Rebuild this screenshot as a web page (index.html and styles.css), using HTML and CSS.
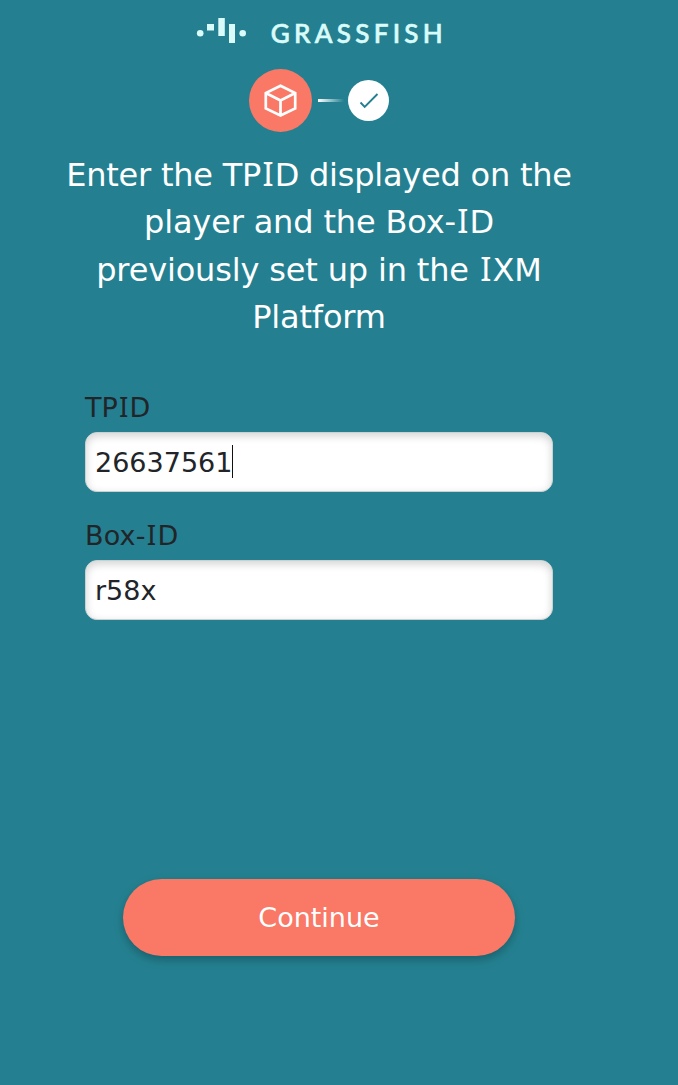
FILE: index.html
```html
<!DOCTYPE html>
<html lang="en">
<head>
<meta charset="utf-8">
<title>Grassfish</title>
<link rel="stylesheet" href="styles.css">
</head>
<body>
<main class="screen">
  <svg class="logo" width="248" height="32" viewBox="0 0 248 32" role="img" aria-label="Grassfish">
    <circle cx="5.200" cy="17.300" r="3.300"/>
    <rect x="12" y="8" width="7" height="6.500"/>
    <rect x="23.300" y="2" width="6.500" height="18"/>
    <rect x="34" y="8" width="6" height="19"/>
    <circle cx="47.700" cy="17.300" r="3.300"/>
    <text class="wordmark" x="75.700" y="26.500" textLength="172" lengthAdjust="spacing">GRASSFISH</text>
  </svg>
  <div class="steps">
    <div class="step step-active">
      <svg width="35" height="35" viewBox="0 0 35 35"><path d="M17.500 2.800 32.200 10v15.500L17.500 32.400 2.800 25.500V10Z M2.800 10l14.700 7.500L32.200 10 M17.500 17.500v15"/></svg>
    </div>
    <div class="connector"></div>
    <div class="step step-next">
      <svg width="22" height="20" viewBox="0 0 22 20"><path d="M2.500 11.500l4.200 4.500L19.500 3"/></svg>
    </div>
  </div>
  <h1 class="title">
    <span class="line line-1">Enter the TP<span class="cap-i">I</span>D displayed on the</span>
    <span class="line">player and the Box-<span class="cap-i">I</span>D</span>
    <span class="line">previously set up in the <span class="cap-i">I</span>XM</span>
    <span class="line">Platform</span>
  </h1>
  <form class="form">
    <div class="label">TP<span class="cap-i">I</span>D</div>
    <div class="field"><span class="value">26637561</span><span class="caret"></span></div>
    <div class="label label-box">Box-<span class="cap-i">I</span>D</div>
    <div class="field"><span class="value">r58x</span></div>
  </form>
  <button class="continue" type="button">Continue</button>
</main>
</body>
</html>
```
FILE: styles.css
```css
* { box-sizing: border-box; }
body {
  margin: 0;
  background: #248090;
  font-family: Verdana, "DejaVu Sans", sans-serif;
  color: #212529;
}
.screen {
  display: flex;
  flex-direction: column;
  align-items: center;
  width: 638px;
  height: 1085px;
  padding-top: 16px;
}
.logo { fill: #d9fbf9; overflow: visible; }
.wordmark { font: 500 26px Lato, sans-serif; stroke: #d9fbf9; stroke-width: .700px; }
.steps { display: flex; align-items: center; margin-top: 21px; }
.step { display: flex; align-items: center; justify-content: center; border-radius: 50%; }
.step svg { fill: none; }
.step-active { width: 63px; height: 63px; background: #fa7866; }
.step-active svg { stroke: #fff; stroke-width: 2.700px; }
.step-next { width: 41px; height: 41px; background: #fff; }
.step-next svg { stroke: #248090; stroke-width: 1.900px; }
.connector {
  width: 26px;
  height: 3px;
  margin: 0 4px 0 6px;
  background: linear-gradient(90deg, #fff, #248090);
}
.title {
  margin: 20px 0 0;
  color: #fff;
  font-size: 32px;
  font-weight: 400;
  letter-spacing: -.160px;
  line-height: 47.400px;
  text-align: center;
}
.line { display: block; white-space: nowrap; }
.line-1 { letter-spacing: -.230px; }
.cap-i { font-family: "Noto Sans", sans-serif; font-size: 1.030em; line-height: 1; margin: 0 .040em; }
.form { width: 468px; margin-top: 46px; }
.label { height: 44px; font-size: 27px; line-height: 40px; }
.label-box { letter-spacing: .200px; }
.field {
  display: flex;
  align-items: center;
  height: 60px;
  margin-bottom: 24px;
  padding: 0 9px;
  border: 1px solid #c9d1d2;
  border-radius: 12px;
  background: #fff;
  box-shadow: inset 0 3px 8px rgba(0, 0, 0, .18);
  font-size: 27px;
}
.value { padding-top: 2px; }
.caret { width: 1px; height: 33px; background: #111; }
.continue {
  width: 392px;
  height: 77px;
  margin-top: 235px;
  border: 0;
  border-radius: 39px;
  background: #fa7866;
  box-shadow: 0 4px 10px rgba(0, 0, 0, .25);
  color: #fff;
  font: 27px Verdana, "DejaVu Sans", sans-serif;
}
```
